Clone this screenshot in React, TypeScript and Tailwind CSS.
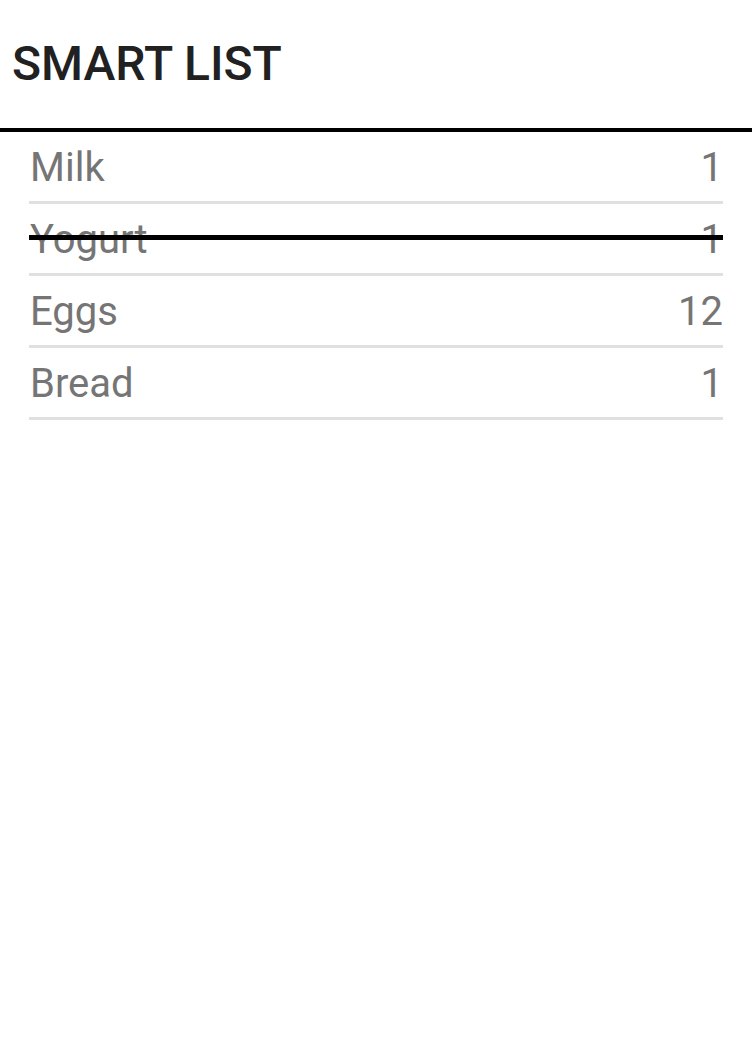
const items = [
  { name: 'Milk', qty: 1, done: false },
  { name: 'Yogurt', qty: 1, done: true },
  { name: 'Eggs', qty: 12, done: false },
  { name: 'Bread', qty: 1, done: false },
];

export default function App() {
  return (
    <div className="min-h-screen bg-white" style={{ fontFamily: 'Roboto, sans-serif' }}>
      <header className="h-[132px] px-3 pt-[36px] border-b-4 border-black">
        <h1 className="text-[48px] leading-[56px] font-medium text-[#212121]">SMART LIST</h1>
      </header>
      <ul className="px-[29px]">
        {items.map((item) => (
          <li
            key={item.name}
            className="relative flex h-[72px] items-center justify-between border-b-[3px] border-[#e0e0e0] pt-[2px] text-[40px] text-[#757575]"
          >
            <span className="pl-px">{item.name}</span>
            <span>{item.qty}</span>
            {item.done && (
              <div className="absolute left-0 right-0 top-[31px] h-[5px] bg-black" />
            )}
          </li>
        ))}
      </ul>
    </div>
  );
}
